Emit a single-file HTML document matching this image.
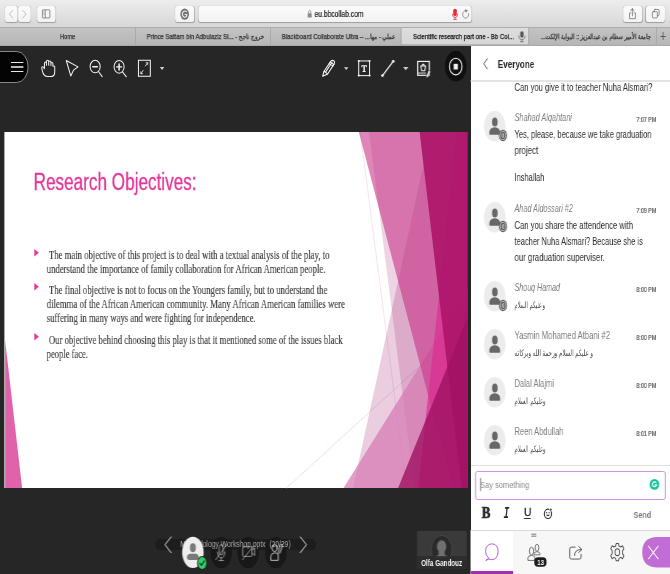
<!DOCTYPE html>
<html><head><meta charset="utf-8"><title>Bb Collaborate</title>
<style>
html,body{margin:0;padding:0;background:#262626;overflow:hidden;}
body{width:670px;height:574px;position:relative;}
#root{position:absolute;left:0;top:0;width:924.0px;height:574px;transform:scaleX(0.729847);transform-origin:0 0;overflow:hidden;background:#262626;font-family:"Liberation Sans",sans-serif;}
#root div{position:absolute;box-sizing:border-box;}
#root svg{position:absolute;overflow:visible;}
.t{white-space:nowrap;will-change:transform;}
</style></head><body><div id="root">
<div class="" style="left:0.0px;top:0px;width:923.48px;height:27px;background:linear-gradient(#ededed,#d7d7d7);"></div>
<div class="" style="left:6.58px;top:6.3px;width:16.99px;height:15.4px;background:linear-gradient(#fbfbfb,#f3f3f3);border-radius:3.5px;box-shadow:0 0.6px 1px rgba(0,0,0,.28),0 0 0.5px rgba(0,0,0,.2);"></div>
<div class="" style="left:24.94px;top:6.3px;width:17.4px;height:15.4px;background:linear-gradient(#fbfbfb,#f3f3f3);border-radius:3.5px;box-shadow:0 0.6px 1px rgba(0,0,0,.28),0 0 0.5px rgba(0,0,0,.2);"></div>
<div class="" style="left:50.56px;top:6.3px;width:25.48px;height:15.4px;background:linear-gradient(#fbfbfb,#f3f3f3);border-radius:3.5px;box-shadow:0 0.6px 1px rgba(0,0,0,.28),0 0 0.5px rgba(0,0,0,.2);"></div>
<div class="" style="left:240.05px;top:6.3px;width:25.62px;height:15.4px;background:linear-gradient(#fbfbfb,#f3f3f3);border-radius:3.5px;box-shadow:0 0.6px 1px rgba(0,0,0,.28),0 0 0.5px rgba(0,0,0,.2);"></div>
<div class="" style="left:272.39px;top:6.3px;width:374.05px;height:15.4px;background:linear-gradient(#fbfbfb,#f3f3f3);border-radius:3.5px;box-shadow:0 0.6px 1px rgba(0,0,0,.28),0 0 0.5px rgba(0,0,0,.2);"></div>
<div class="" style="left:853.6px;top:6.3px;width:26.03px;height:15.4px;background:linear-gradient(#fbfbfb,#f3f3f3);border-radius:3.5px;box-shadow:0 0.6px 1px rgba(0,0,0,.28),0 0 0.5px rgba(0,0,0,.2);"></div>
<div class="" style="left:885.25px;top:6.3px;width:26.03px;height:15.4px;background:linear-gradient(#fbfbfb,#f3f3f3);border-radius:3.5px;box-shadow:0 0.6px 1px rgba(0,0,0,.28),0 0 0.5px rgba(0,0,0,.2);"></div>
<svg style="left:0.0px;top:0px;width:137.01px;height:46px;" viewBox="0 0 670 308" preserveAspectRatio="none">
<g fill="none" stroke="#b9b9b9" stroke-width="6" stroke-linecap="round" stroke-linejoin="round">
<path d="M85,70 L63,95 L85,120"/><path d="M153,70 L175,95 L153,120"/></g>
<g fill="none" stroke="#6a6a6a" stroke-width="5"><rect x="284" y="66" width="50" height="54" rx="3"/><path d="M303,66 L303,120"/><path d="M289,78 h9 M289,88 h9 M289,98 h9" stroke-width="3"/></g>
</svg>
<svg style="left:232.93px;top:0px;width:137.01px;height:46px;" viewBox="0 0 670 308" preserveAspectRatio="none">
<ellipse cx="98" cy="95" rx="29" ry="38" fill="#727272"/>
<path d="M112,80 Q100,68 88,78 Q78,92 86,108 Q98,122 112,108 L112,97 L98,97" fill="none" stroke="#f4f4f4" stroke-width="7"/>
</svg>
<svg style="left:397.34px;top:0px;width:137.01px;height:46px;" viewBox="0 0 670 308" preserveAspectRatio="none">
<rect x="120" y="88" width="27" height="30" rx="3" fill="#8c8c8c"/>
<path d="M126,90 L126,80 Q126,70 133.5,70 Q141,70 141,80 L141,90" fill="none" stroke="#8c8c8c" stroke-width="5"/>
</svg>
<div class="t" style="left:431.05px;top:9.27px;font-size:9.2px;font-family:'Liberation Sans',sans-serif;line-height:normal;transform:scaleX(0.9993);transform-origin:left top;color:#1a1a1a;-webkit-text-stroke:0.2px #1a1a1a;">eu.bbcollab.com</div>
<svg style="left:602.87px;top:0px;width:137.01px;height:46px;" viewBox="0 0 670 308" preserveAspectRatio="none">
<rect x="88" y="58" width="24" height="50" rx="12" fill="#ea2a30"/>
<path d="M82,92 Q84,118 100,118 Q116,118 118,92 M100,118 L100,130 M88,130 L112,130" fill="none" stroke="#ea2a30" stroke-width="5"/>
<path d="M176,72 A20,25 0 1 0 190,88" fill="none" stroke="#7a7a7a" stroke-width="5"/>
<path d="M166,62 L186,70 L172,86 Z" fill="#7a7a7a"/>
</svg>
<svg style="left:780.99px;top:0px;width:137.01px;height:46px;" viewBox="0 0 670 308" preserveAspectRatio="none">
<g fill="none" stroke="#6d6d6d" stroke-width="5" stroke-linejoin="round" stroke-linecap="round">
<path d="M408,86 L399,86 L399,125 L438,125 L438,86 L429,86"/>
<path d="M418,106 L418,58 M407,72 L418,57 L429,72"/>
<rect x="564" y="63" width="33" height="42" rx="6"/>
<rect x="552" y="78" width="33" height="42" rx="6" fill="#f7f7f7"/>
</g>
</svg>
<div class="" style="left:0.0px;top:27px;width:923.48px;height:19px;background:linear-gradient(#c3c3c3,#b6b6b6);border-top:1px solid #aeaeae;border-bottom:1.6px solid #a8a8a8;"></div>
<div class="" style="left:549.7px;top:27.6px;width:174.28px;height:16.4px;background:linear-gradient(#dedede,#d6d6d6);"></div>
<div class="" style="left:184.97px;top:28px;width:0.96px;height:17px;background:#a3a3a3;"></div>
<div class="" style="left:369.94px;top:28px;width:0.96px;height:17px;background:#a3a3a3;"></div>
<div class="" style="left:549.43px;top:28px;width:0.96px;height:17px;background:#a3a3a3;"></div>
<div class="" style="left:723.99px;top:28px;width:0.96px;height:17px;background:#a3a3a3;"></div>
<div class="" style="left:899.23px;top:28px;width:0.96px;height:17px;background:#a3a3a3;"></div>
<div class="t" style="left:81.8px;top:32.1px;font-size:7.4px;font-family:'Liberation Sans',sans-serif;line-height:normal;transform:scaleX(1.07);transform-origin:left top;color:#333;-webkit-text-stroke:0.25px #333;">Home</div>
<div class="t" style="left:201.41px;top:32.1px;font-size:7.4px;font-family:'Liberation Sans',sans-serif;line-height:normal;transform:scaleX(1.1146);transform-origin:left top;color:#333;-webkit-text-stroke:0.25px #333;">Prince Sattam bin Adbulaziz Si... - خروج ناجح</div>
<div class="t" style="left:385.83px;top:32.1px;font-size:7.4px;font-family:'Liberation Sans',sans-serif;line-height:normal;transform:scaleX(1.1102);transform-origin:left top;color:#333;-webkit-text-stroke:0.25px #333;">Blackboard Collaborate Ultra – عملي - مها...&rlm;</div>
<div class="t" style="left:565.87px;top:32.1px;font-size:7.4px;font-family:'Liberation Sans',sans-serif;line-height:normal;transform:scaleX(1.1096);transform-origin:left top;color:#151515;-webkit-text-stroke:0.25px #151515;">Scientific research part one - Bb Col...</div>
<div class="t" style="left:741.11px;top:32.1px;font-size:7.4px;font-family:'Liberation Sans',sans-serif;line-height:normal;transform:scaleX(1.0231);transform-origin:left top;color:#333;-webkit-text-stroke:0.25px #333;direction:rtl;">جامعة الأمير سطام بن عبدالعزيز :: البوابة الإلكت...</div>
<div class="" style="left:904.57px;top:36px;width:7.4px;height:0.9px;background:#555;"></div>
<div class="" style="left:907.86px;top:32.3px;width:0.9px;height:8.2px;background:#555;"></div>
<svg style="left:687.81px;top:0px;width:230.19px;height:48px;" viewBox="0 0 670 191" preserveAspectRatio="none"><rect x="72" y="124" width="13" height="26" rx="6.5" fill="#555"/><path d="M66,142 Q67,158 78.5,158 Q90,158 91,142 M78.5,158 L78.5,166 M71,166 L86,166" fill="none" stroke="#555" stroke-width="2.6"/></svg>
<div class="" style="left:0.0px;top:45.9px;width:645.34px;height:528.1px;background:#262626;"></div>
<div class="" style="left:645.34px;top:46px;width:278.14px;height:528px;background:#fff;"></div>
<div class="slide" style="left:6.3px;top:131.9px;width:633.56px;height:355.8px;background:#fff;overflow:hidden;"></div>
<svg style="left:6.85px;top:132px;width:633.01px;height:356px;" viewBox="0 0 12192000 6858000" preserveAspectRatio="none"><line x1="9371012" y1="0" x2="10590212" y2="6858000" stroke="#f9dcec" stroke-width="1" vector-effect="non-scaling-stroke"/><line x1="12188825" y1="3681413" x2="7425267" y2="6858000" stroke="#f7d3e6" stroke-width="1" vector-effect="non-scaling-stroke"/><polygon points="11227007,0 12192000,0 12192000,6858000 9181475,6858000" fill="rgb(185,90,150)" fill-opacity="0.3"/><polygon points="9603442,0 12192000,0 12192000,6858000 10805778,6858000" fill="rgb(166,34,113)" fill-opacity="0.2"/><polygon points="8932333,6858000 12192000,3048000 12192000,6858000" fill="rgb(215,120,179)" fill-opacity="0.72"/><polygon points="9334500,0 12192000,0 12192000,6858000 11808442,6858000" fill="rgb(200,53,137)" fill-opacity="0.6"/><polygon points="11918465,0 12192000,0 12192000,6858000 10898730,6858000" fill="rgb(221,45,146)" fill-opacity="0.7"/><polygon points="10938999,0 12192000,0 12192000,6858000 12048381,6858000" fill="rgb(172,22,105)" fill-opacity="0.92"/><polygon points="10371666,6858000 12192000,3589867 12192000,6858000" fill="rgb(160,18,98)" fill-opacity="0.8"/><polygon points="0,4013200 448733,6858000 0,6858000" fill="rgb(219,70,155)" fill-opacity="0.85"/></svg>
<div class="t" style="left:45.63px;top:168.73px;font-size:23.5px;font-family:'Liberation Sans',sans-serif;line-height:normal;transform:scaleX(0.9999);transform-origin:left top;color:#E5389A;-webkit-text-stroke:0.35px #E5389A;">Research Objectives:</div>
<div class="t" style="left:67.27px;top:248.4px;font-size:11.9px;font-family:'Liberation Serif',serif;line-height:normal;transform:scaleX(1.0011);transform-origin:left top;color:#3c3c3c;-webkit-text-stroke:0.15px #3c3c3c;">The main objective of this project is to deal with a textual analysis of the play, to</div>
<div class="t" style="left:63.85px;top:262.4px;font-size:11.9px;font-family:'Liberation Serif',serif;line-height:normal;transform:scaleX(1.0022);transform-origin:left top;color:#3c3c3c;-webkit-text-stroke:0.15px #3c3c3c;">understand the importance of family collaboration for African American people.</div>
<div class="t" style="left:67.27px;top:282.8px;font-size:11.9px;font-family:'Liberation Serif',serif;line-height:normal;transform:scaleX(1.0068);transform-origin:left top;color:#3c3c3c;-webkit-text-stroke:0.15px #3c3c3c;">The final objective is not to focus on the Youngers family, but to understand the</div>
<div class="t" style="left:63.85px;top:297.1px;font-size:11.9px;font-family:'Liberation Serif',serif;line-height:normal;transform:scaleX(1.0088);transform-origin:left top;color:#3c3c3c;-webkit-text-stroke:0.15px #3c3c3c;">dilemma of the African American community. Many African American families were</div>
<div class="t" style="left:63.85px;top:311.4px;font-size:11.9px;font-family:'Liberation Serif',serif;line-height:normal;transform:scaleX(0.9983);transform-origin:left top;color:#3c3c3c;-webkit-text-stroke:0.15px #3c3c3c;">suffering in many ways and were fighting for independence.</div>
<div class="t" style="left:67.27px;top:332.6px;font-size:11.9px;font-family:'Liberation Serif',serif;line-height:normal;transform:scaleX(0.9988);transform-origin:left top;color:#3c3c3c;-webkit-text-stroke:0.15px #3c3c3c;">Our objective behind choosing this play is that it mentioned some of the issues black</div>
<div class="t" style="left:63.85px;top:347.0px;font-size:11.9px;font-family:'Liberation Serif',serif;line-height:normal;transform:scaleX(0.9804);transform-origin:left top;color:#3c3c3c;-webkit-text-stroke:0.15px #3c3c3c;">people face.</div>
<svg style="left:47.13px;top:248.89999999999998px;width:6.3px;height:7.6px;" viewBox="0 0 10 10" preserveAspectRatio="none"><polygon points="0,0 10,5 0,10" fill="#E5389A"/></svg>
<svg style="left:47.13px;top:283.2px;width:6.3px;height:7.6px;" viewBox="0 0 10 10" preserveAspectRatio="none"><polygon points="0,0 10,5 0,10" fill="#E5389A"/></svg>
<svg style="left:47.13px;top:333.4px;width:6.3px;height:7.6px;" viewBox="0 0 10 10" preserveAspectRatio="none"><polygon points="0,0 10,5 0,10" fill="#E5389A"/></svg>
<div class="" style="left:-16.44px;top:51.4px;width:55.35px;height:31.7px;background:#040404;border:1.3px solid #9a9a9a;border-radius:16px;"></div>
<div class="" style="left:15.07px;top:62.0px;width:16.85px;height:1.2px;background:#e8e8e8;"></div>
<div class="" style="left:15.07px;top:66.4px;width:16.85px;height:1.2px;background:#b8b8b8;"></div>
<div class="" style="left:15.07px;top:70.8px;width:16.85px;height:1.2px;background:#e8e8e8;"></div>
<svg style="left:47.96px;top:52px;width:102.76px;height:32px;" viewBox="0 0 670 286" preserveAspectRatio="none">
<g fill="none" stroke="#f4f4f4" stroke-width="9" stroke-linejoin="round" stroke-linecap="round">
<path d="M84,150 L84,102 Q84,90 93,90 Q102,90 102,102 L102,86 Q102,74 112,74 Q122,74 122,86 L122,118 M122,92 Q122,80 132,80 Q142,80 142,92 L142,120 M142,104 Q142,94 151,94 Q160,94 160,106 L160,128 Q168,120 176,130 L176,182 Q174,220 140,220 L108,220 Q84,218 72,190 L61,150 Q57,133 68,131 Q79,130 84,150 M102,100 L102,118"/>
<path d="M279,76 L384,133 L344,162 L319,214 Z"/>
<ellipse cx="537" cy="130" rx="45" ry="56"/>
<path d="M568,176 L600,220"/>
<path d="M516,131 L557,131" stroke-width="13"/>
</g></svg>
<svg style="left:143.87px;top:52px;width:102.76px;height:32px;" viewBox="0 0 670 286" preserveAspectRatio="none">
<g fill="none" stroke="#f4f4f4" stroke-width="9" stroke-linejoin="round" stroke-linecap="round">
<ellipse cx="125" cy="132" rx="45" ry="57"/>
<path d="M157,180 L190,222"/>
<path d="M104,133 L147,133 M125,106 L125,160" stroke-width="13"/>
<rect x="298" y="74" width="106" height="143" stroke-linejoin="miter"/>
<path d="M360,125 L380,97 M366,96 L381,96 L381,112 M340,165 L320,193 M319,177 L319,194 L334,194" stroke-width="7"/>
</g>
<polygon points="489,134 529,134 509,160" fill="#d0d0d0"/></svg>
<svg style="left:431.6px;top:52px;width:102.76px;height:32px;" viewBox="0 0 670 286" preserveAspectRatio="none">
<g fill="none" stroke="#f4f4f4" stroke-width="9.5" stroke-linejoin="round" stroke-linecap="round">
<path d="M66,216 L78,172 L138,84 Q150,70 165,78 Q178,88 170,104 L110,196 Z"/>
<path d="M78,172 L110,196 M92,180 L150,92 M124,104 L158,124 M132,92 L166,112"/>
<rect x="388" y="80" width="97" height="131" stroke-linejoin="miter" stroke-width="9"/>
</g>
<g fill="#f4f4f4">
<circle cx="388" cy="80" r="9"/><circle cx="485" cy="80" r="9"/><circle cx="388" cy="211" r="9"/><circle cx="485" cy="211" r="9"/>
<path d="M412,118 L461,118 L461,136 L455,136 L453,127 L443,127 L443,170 L451,172 L451,178 L422,178 L422,172 L430,170 L430,127 L420,127 L418,136 L412,136 Z"/>
</g>
<polygon points="256,137 296,137 276,161" fill="#d0d0d0"/></svg>
<svg style="left:513.81px;top:48px;width:137.01px;height:40px;" viewBox="0 0 670 268" preserveAspectRatio="none">
<ellipse cx="540" cy="122" rx="72" ry="102" fill="#0f0f0f"/>
<g fill="none" stroke="#f4f4f4" stroke-width="8" stroke-linejoin="round" stroke-linecap="round">
<path d="M49,185 L121,89"/>
<rect x="285" y="90" width="78" height="93" stroke-linejoin="miter"/>
<path d="M285,168 L338,168" stroke-width="6"/>
<path d="M306,120 L338,120 L333,152 L311,152 Z M313,118 Q322,98 331,118" stroke-width="7"/>
<ellipse cx="540" cy="124" rx="42" ry="56" stroke-width="7"/>
</g>
<g fill="#f4f4f4">
<circle cx="49" cy="185" r="9"/><circle cx="121" cy="89" r="9"/>
<rect x="526" y="106" width="28" height="38"/>
<path d="M343,188 L357,150 L372,157 L357,194 L340,199 Z" stroke="#262626" stroke-width="4"/>
</g>
<polygon points="187,128 223,128 205,149" fill="#d0d0d0"/></svg>
<svg style="left:643.97px;top:45px;width:274.03px;height:85px;" viewBox="0 0 670 285" preserveAspectRatio="none"><path d="M58,46 L46,63 L58,80" fill="none" stroke="#555" stroke-width="3.2" stroke-linecap="round" stroke-linejoin="round"/></svg>
<div class="t" style="left:681.65px;top:56.7px;font-size:11.6px;font-family:'Liberation Sans',sans-serif;line-height:normal;transform:scaleX(0.958);transform-origin:left top;color:#2a2a2a;font-weight:bold;">Everyone</div>
<div class="" style="left:645.34px;top:80.1px;width:278.14px;height:1.7px;background:#e3e3e3;"></div>
<div class="t" style="left:704.53px;top:82.07px;font-size:10.2px;font-family:'Liberation Sans',sans-serif;line-height:normal;transform:scaleX(1.0228);transform-origin:left top;color:#2c2c2c;">Can you give it to teacher Nuha Alsmari?</div>
<svg style="left:662.6px;top:111.4px;width:29.6px;height:30.599999999999994px;" viewBox="0 0 100 100" preserveAspectRatio="none">
<circle cx="50" cy="50" r="50" fill="#ececec"/>
<ellipse cx="50.5" cy="36" rx="13" ry="15" fill="#676767"/>
<path d="M25,74 L25,70 Q26,54 50,53 Q74,54 75,70 L75,74 Q75,78 70,78 L30,78 Q25,78 25,74 Z" fill="#676767"/>
<circle cx="88" cy="80" r="19" fill="#5c5c5c"/>
<circle cx="88" cy="80" r="13.5" fill="none" stroke="#f2f2f2" stroke-width="2.4"/>
<path d="M91,73 L91,87 L84,84 L84,76 Z" fill="none" stroke="#f2f2f2" stroke-width="2.4" stroke-linejoin="round"/></svg>
<div class="t" style="left:704.53px;top:111.77px;font-size:10.2px;font-family:'Liberation Sans',sans-serif;line-height:normal;transform:scaleX(0.9806);transform-origin:left top;color:#7e7e7e;font-style:italic;">Shahad Alqahtani</div>
<div class="t" style="left:871.83px;top:115.85px;font-size:6.8px;font-family:'Liberation Sans',sans-serif;line-height:normal;transform:scaleX(1.0718);transform-origin:left top;color:#555;-webkit-text-stroke:0.2px #555;">7:07 PM</div>
<div class="t" style="left:704.53px;top:128.77px;font-size:10.2px;font-family:'Liberation Sans',sans-serif;line-height:normal;transform:scaleX(1.0124);transform-origin:left top;color:#2c2c2c;">Yes, please, because we take graduation</div>
<div class="t" style="left:704.53px;top:144.77px;font-size:10.2px;font-family:'Liberation Sans',sans-serif;line-height:normal;transform:scaleX(1.0576);transform-origin:left top;color:#2c2c2c;">project</div>
<div class="t" style="left:704.53px;top:171.57px;font-size:10.2px;font-family:'Liberation Sans',sans-serif;line-height:normal;transform:scaleX(1.0012);transform-origin:left top;color:#2c2c2c;">Inshallah</div>
<svg style="left:662.6px;top:201.7px;width:29.6px;height:30.600000000000023px;" viewBox="0 0 100 100" preserveAspectRatio="none">
<circle cx="50" cy="50" r="50" fill="#ececec"/>
<ellipse cx="50.5" cy="36" rx="13" ry="15" fill="#676767"/>
<path d="M25,74 L25,70 Q26,54 50,53 Q74,54 75,70 L75,74 Q75,78 70,78 L30,78 Q25,78 25,74 Z" fill="#676767"/>
<circle cx="88" cy="80" r="19" fill="#5c5c5c"/>
<circle cx="88" cy="80" r="13.5" fill="none" stroke="#f2f2f2" stroke-width="2.4"/>
<path d="M91,73 L91,87 L84,84 L84,76 Z" fill="none" stroke="#f2f2f2" stroke-width="2.4" stroke-linejoin="round"/></svg>
<div class="t" style="left:704.53px;top:203.17px;font-size:10.2px;font-family:'Liberation Sans',sans-serif;line-height:normal;transform:scaleX(0.9687);transform-origin:left top;color:#7e7e7e;font-style:italic;">Ahad Aldossari #2</div>
<div class="t" style="left:871.83px;top:206.85px;font-size:6.8px;font-family:'Liberation Sans',sans-serif;line-height:normal;transform:scaleX(1.0718);transform-origin:left top;color:#555;-webkit-text-stroke:0.2px #555;">7:09 PM</div>
<div class="t" style="left:704.53px;top:220.47px;font-size:10.2px;font-family:'Liberation Sans',sans-serif;line-height:normal;transform:scaleX(1.0312);transform-origin:left top;color:#2c2c2c;">Can you share the attendence with</div>
<div class="t" style="left:704.53px;top:236.07px;font-size:10.2px;font-family:'Liberation Sans',sans-serif;line-height:normal;transform:scaleX(1.0046);transform-origin:left top;color:#2c2c2c;">teacher Nuha Alsmari? Because she is</div>
<div class="t" style="left:704.53px;top:251.77px;font-size:10.2px;font-family:'Liberation Sans',sans-serif;line-height:normal;transform:scaleX(1.048);transform-origin:left top;color:#2c2c2c;">our graduation superviser.</div>
<svg style="left:662.6px;top:281.09999999999997px;width:29.6px;height:30.600000000000023px;" viewBox="0 0 100 100" preserveAspectRatio="none">
<circle cx="50" cy="50" r="50" fill="#ececec"/>
<ellipse cx="50.5" cy="36" rx="13" ry="15" fill="#676767"/>
<path d="M25,74 L25,70 Q26,54 50,53 Q74,54 75,70 L75,74 Q75,78 70,78 L30,78 Q25,78 25,74 Z" fill="#676767"/>
<circle cx="88" cy="80" r="19" fill="#5c5c5c"/>
<circle cx="88" cy="80" r="13.5" fill="none" stroke="#f2f2f2" stroke-width="2.4"/>
<path d="M91,73 L91,87 L84,84 L84,76 Z" fill="none" stroke="#f2f2f2" stroke-width="2.4" stroke-linejoin="round"/></svg>
<div class="t" style="left:704.53px;top:282.27px;font-size:10.2px;font-family:'Liberation Sans',sans-serif;line-height:normal;transform:scaleX(0.9549);transform-origin:left top;color:#7e7e7e;font-style:italic;">Shouq Hamad</div>
<div class="t" style="left:871.83px;top:286.35px;font-size:6.8px;font-family:'Liberation Sans',sans-serif;line-height:normal;transform:scaleX(1.0718);transform-origin:left top;color:#555;-webkit-text-stroke:0.2px #555;">8:00 PM</div>
<div class="t" style="left:704.53px;top:298.77px;font-size:10.2px;font-family:'Liberation Sans',sans-serif;line-height:normal;transform:scaleX(0.7409);transform-origin:left top;color:#2c2c2c;direction:rtl;font-size:9.4px;color:#4c4c4c;">و عليكم السلام</div>
<svg style="left:662.6px;top:328.9px;width:29.6px;height:30.600000000000023px;" viewBox="0 0 100 100" preserveAspectRatio="none">
<circle cx="50" cy="50" r="50" fill="#ececec"/>
<ellipse cx="50.5" cy="36" rx="13" ry="15" fill="#676767"/>
<path d="M25,74 L25,70 Q26,54 50,53 Q74,54 75,70 L75,74 Q75,78 70,78 L30,78 Q25,78 25,74 Z" fill="#676767"/>
</svg>
<div class="t" style="left:704.53px;top:330.17px;font-size:10.2px;font-family:'Liberation Sans',sans-serif;line-height:normal;transform:scaleX(1.033);transform-origin:left top;color:#7e7e7e;">Yasmin Mohamed Atbani #2</div>
<div class="t" style="left:871.83px;top:334.35px;font-size:6.8px;font-family:'Liberation Sans',sans-serif;line-height:normal;transform:scaleX(1.0718);transform-origin:left top;color:#555;-webkit-text-stroke:0.2px #555;">8:00 PM</div>
<div class="t" style="left:704.53px;top:346.77px;font-size:10.2px;font-family:'Liberation Sans',sans-serif;line-height:normal;transform:scaleX(0.8304);transform-origin:left top;color:#2c2c2c;direction:rtl;font-size:9.4px;color:#4c4c4c;">و عليكم السلام ورحمة الله وبركاته</div>
<svg style="left:662.6px;top:376.9px;width:29.6px;height:30.600000000000023px;" viewBox="0 0 100 100" preserveAspectRatio="none">
<circle cx="50" cy="50" r="50" fill="#ececec"/>
<ellipse cx="50.5" cy="36" rx="13" ry="15" fill="#676767"/>
<path d="M25,74 L25,70 Q26,54 50,53 Q74,54 75,70 L75,74 Q75,78 70,78 L30,78 Q25,78 25,74 Z" fill="#676767"/>
</svg>
<div class="t" style="left:704.53px;top:378.07px;font-size:10.2px;font-family:'Liberation Sans',sans-serif;line-height:normal;transform:scaleX(1.014);transform-origin:left top;color:#7e7e7e;">Dalal Alajmi</div>
<div class="t" style="left:871.83px;top:382.35px;font-size:6.8px;font-family:'Liberation Sans',sans-serif;line-height:normal;transform:scaleX(1.0718);transform-origin:left top;color:#555;-webkit-text-stroke:0.2px #555;">8:00 PM</div>
<div class="t" style="left:704.53px;top:394.77px;font-size:10.2px;font-family:'Liberation Sans',sans-serif;line-height:normal;transform:scaleX(0.7769);transform-origin:left top;color:#2c2c2c;direction:rtl;font-size:9.4px;color:#4c4c4c;">وعليكم السلام</div>
<svg style="left:662.6px;top:424.9px;width:29.6px;height:30.600000000000023px;" viewBox="0 0 100 100" preserveAspectRatio="none">
<circle cx="50" cy="50" r="50" fill="#ececec"/>
<ellipse cx="50.5" cy="36" rx="13" ry="15" fill="#676767"/>
<path d="M25,74 L25,70 Q26,54 50,53 Q74,54 75,70 L75,74 Q75,78 70,78 L30,78 Q25,78 25,74 Z" fill="#676767"/>
</svg>
<div class="t" style="left:704.53px;top:426.07px;font-size:10.2px;font-family:'Liberation Sans',sans-serif;line-height:normal;transform:scaleX(1.0108);transform-origin:left top;color:#7e7e7e;">Reen Abdullah</div>
<div class="t" style="left:871.83px;top:430.35px;font-size:6.8px;font-family:'Liberation Sans',sans-serif;line-height:normal;transform:scaleX(1.0718);transform-origin:left top;color:#555;-webkit-text-stroke:0.2px #555;">8:01 PM</div>
<div class="t" style="left:704.53px;top:442.77px;font-size:10.2px;font-family:'Liberation Sans',sans-serif;line-height:normal;transform:scaleX(0.7769);transform-origin:left top;color:#2c2c2c;direction:rtl;font-size:9.4px;color:#4c4c4c;">وعليكم السلام</div>
<div class="" style="left:645.34px;top:465px;width:278.14px;height:1px;background:#dedede;"></div>
<div class="" style="left:650.82px;top:471.3px;width:261.01px;height:28.6px;background:#fff;border:1.4px solid #c583d6;border-radius:3px;"></div>
<div class="" style="left:657.67px;top:478px;width:0.96px;height:13px;background:#555;"></div>
<div class="t" style="left:658.49px;top:480.46px;font-size:9.1px;font-family:'Liberation Sans',sans-serif;line-height:normal;transform:scaleX(1.1183);transform-origin:left top;color:#8c8c8c;">Say something</div>
<svg style="left:889.77px;top:478.9px;width:13.15px;height:10.800000000000011px;" viewBox="0 0 100 100" preserveAspectRatio="none"><circle cx="50" cy="50" r="50" fill="#15c39a"/><path d="M68,36 A22,22 0 1 0 72,54 L52,54" fill="none" stroke="#fff" stroke-width="11"/></svg>
<div class="t" style="left:659.59px;top:504.42px;font-size:15.8px;font-family:'Liberation Serif',serif;line-height:normal;transform:scaleX(1.1302);transform-origin:left top;color:#2b2b2b;font-weight:bold;-webkit-text-stroke:0.6px #2b2b2b;">B</div>
<div class="t" style="left:690.28px;top:503.57px;font-size:16.5px;font-family:'Liberation Sans',sans-serif;line-height:normal;transform:scaleX(0.7743);transform-origin:left top;color:#2b2b2b;font-weight:bold;font-style:italic;font-family:'Liberation Mono',monospace;">I</div>
<div class="t" style="left:717.55px;top:506.33px;font-size:10.8px;font-family:'Liberation Sans',sans-serif;line-height:normal;transform:scaleX(1.2979);transform-origin:left top;color:#2b2b2b;-webkit-text-stroke:0.3px #2b2b2b;">U</div>
<div class="" style="left:718.23px;top:517.8px;width:8.49px;height:1px;background:#2b2b2b;"></div>
<svg style="left:649.45px;top:500px;width:123.31px;height:28px;" viewBox="0 0 670 208" preserveAspectRatio="none"><ellipse cx="553" cy="103" rx="27" ry="35" fill="none" stroke="#2b2b2b" stroke-width="8"/><ellipse cx="543" cy="95" rx="4.5" ry="6" fill="#2b2b2b"/><ellipse cx="562" cy="95" rx="4.5" ry="6" fill="#2b2b2b"/><path d="M538,110 Q553,130 568,110 Z" fill="#2b2b2b"/><circle cx="574" cy="72" r="12" fill="#fff"/><path d="M566,72 h16 M574,63 v18" stroke="#2b2b2b" stroke-width="6"/></svg>
<div class="t" style="left:868.13px;top:509.1px;font-size:9.5px;font-family:'Liberation Sans',sans-serif;line-height:normal;transform:scaleX(1.0377);transform-origin:left top;color:#7a7a7a;font-weight:bold;">Send</div>
<div class="" style="left:645.42px;top:530px;width:278.14px;height:44px;background:#f7f7f7;border-top:1px solid #d9d9d9;"></div>
<div class="" style="left:645.42px;top:530.5px;width:57.88px;height:43.5px;background:#fff;"></div>
<div class="" style="left:645.42px;top:570.9px;width:57.88px;height:3.2px;background:#a22eb3;"></div>
<svg style="left:643.97px;top:528px;width:274.03px;height:46px;" viewBox="0 0 670 154" preserveAspectRatio="none">
<path d="M205,21 h17 M205,27.6 h17" stroke="#a2a2a2" stroke-width="5"/>
<g fill="none" stroke-linecap="round" stroke-linejoin="round">
<path d="M62,100 Q52,92 52,78 Q53,54 73,53 Q94,54 94,79 Q93,106 72,106 Q67,106 63,104 L54,108 Z" stroke="#b455d1" stroke-width="3.2"/>
<g stroke="#4a4a4a" stroke-width="3">
<path d="M352,64 L340,64 Q334,64 334,71 L334,98 Q334,104 340,104 L366,104 Q372,104 372,98 L372,88"/>
<path d="M350,92 Q350,72 372,72 M364,62 L375,72 L364,82"/>
<g transform="translate(493.5,81) scale(0.96,1.15) translate(-493,-81)"><ellipse cx="493" cy="81" rx="8" ry="10"/>
<path d="M489,56 L497,56 L499,63 L505,66 L511,62 L516,71 L511,77 L511,85 L516,91 L511,100 L505,96 L499,99 L497,106 L489,106 L487,99 L481,96 L475,100 L470,91 L475,85 L475,77 L470,71 L475,62 L481,66 L487,63 Z"/>
</g></g></g>

<path d="M577,81 Q577,30 628,30 L670,30 L670,132 L628,132 Q577,132 577,81 Z" fill="#c06dd6"/>
<path d="M598,61 L630,103 M630,61 L598,103" stroke="#fff" stroke-width="3.6" stroke-linecap="round"/>
</svg>
<svg style="left:705.63px;top:530px;width:116.46px;height:44px;" viewBox="0 0 670 347" preserveAspectRatio="none">
<g fill="#f7f7f7" stroke="#4a4a4a" stroke-width="6" stroke-linejoin="round">
<ellipse cx="171" cy="140" rx="15" ry="27"/>
<path d="M148,196 L148,184 Q150,172 171,171 Q192,172 194,184 L194,196 Z"/>
<ellipse cx="128" cy="166" rx="17" ry="30"/>
<path d="M100,240 L100,218 Q102,202 128,200 Q152,202 154,218 L154,240 Z"/>
</g>
<rect x="150" y="214" width="96" height="76" rx="30" fill="#1c1c1c"/>
</svg>
<div class="t" style="left:736.18px;top:558.36px;font-size:8px;font-family:'Liberation Sans',sans-serif;line-height:normal;transform:scaleX(1.0611);transform-origin:left top;color:#fff;font-weight:bold;">13</div>
<div class="" style="left:212.65px;top:539.2px;width:220.05px;height:11.2px;background:#1d1d1d;border-radius:6px;"></div>
<svg style="left:205.52px;top:528px;width:137.01px;height:46px;" viewBox="0 0 670 308" preserveAspectRatio="none"><ellipse cx="475" cy="165" rx="72" ry="105" fill="#181818"/></svg>
<svg style="left:315.13px;top:528px;width:137.01px;height:46px;" viewBox="0 0 670 308" preserveAspectRatio="none"><ellipse cx="122" cy="165" rx="72" ry="105" fill="#181818"/><ellipse cx="308" cy="165" rx="72" ry="105" fill="#181818"/></svg>
<div class="t" style="left:247.45px;top:540.28px;font-size:8.2px;font-family:'Liberation Sans',sans-serif;line-height:normal;transform:scaleX(1.1269);transform-origin:left top;color:#a9a9a9;">Methodology Workshop.pptx&nbsp; (20/29)</div>
<svg style="left:205.52px;top:528px;width:137.01px;height:46px;" viewBox="0 0 670 308" preserveAspectRatio="none">
<path d="M139,60 L98,112 L139,165" fill="none" stroke="#f2f2f2" stroke-width="6" stroke-linecap="round" stroke-linejoin="round"/>
<ellipse cx="285" cy="163" rx="72" ry="105" fill="#eeeeee"/>
<ellipse cx="285" cy="132" rx="20" ry="30" fill="#7a7a7a"/>
<path d="M245,200 Q245,176 265,172 L305,172 Q325,176 325,200 Q325,214 310,214 L260,214 Q245,214 245,200 Z" fill="#7a7a7a"/>
<ellipse cx="347" cy="235" rx="34" ry="48" fill="#262626"/>
<ellipse cx="347" cy="235" rx="28" ry="40" fill="#2fd064"/>
<path d="M332,236 L343,250 L362,220" fill="none" stroke="#1d1d1d" stroke-width="7" stroke-linecap="round" stroke-linejoin="round"/>
<g fill="none" stroke="#b4b4b4" stroke-width="5" stroke-linecap="round">
<rect x="462" y="112" width="26" height="68" rx="13"/>
<path d="M450,160 Q452,200 475,200 Q498,200 500,160 M475,200 L475,218 M460,218 L490,218"/>
<path d="M438,212 L512,112"/>
</g>
</svg>
<svg style="left:315.13px;top:528px;width:137.01px;height:46px;" viewBox="0 0 670 308" preserveAspectRatio="none">
<path d="M472,60 L513,112 L472,165" fill="none" stroke="#f2f2f2" stroke-width="6" stroke-linecap="round" stroke-linejoin="round"/>
<g fill="none" stroke="#b4b4b4" stroke-width="5" stroke-linecap="round" stroke-linejoin="round">
<rect x="86" y="126" width="62" height="64" rx="6"/>
<path d="M148,150 L166,134 L166,184 L148,168"/>
<path d="M85,212 L160,118"/>
</g>
<g fill="none" stroke="#f0f0f0" stroke-width="5" stroke-linecap="round" stroke-linejoin="round">
<ellipse cx="300" cy="135" rx="17" ry="23"/>
<path d="M274,214 L274,190 Q276,168 300,166 Q316,166 324,178 L324,214 Z"/>
<path d="M322,176 L336,118 Q342,104 350,110 Q354,116 350,126 L336,168"/>
</g>
</svg>
<svg style="left:548.06px;top:520px;width:102.76px;height:54px;" viewBox="0 0 670 482" preserveAspectRatio="none">
<rect x="152" y="97" width="445" height="340" fill="#3a3a3a"/>
<ellipse cx="372" cy="262" rx="93" ry="124" fill="#2a2a2a" stroke="#585858" stroke-width="5"/>
<ellipse cx="372" cy="236" rx="42" ry="56" fill="#707070"/>
<path d="M345,280 L345,310 Q320,318 300,340 L445,340 Q425,318 400,310 L400,280 Z" fill="#707070"/>
<rect x="152" y="322" width="445" height="115" fill="#2d2d2d" fill-opacity="0.92"/>
</svg>
<div class="t" style="left:576.7px;top:557.71px;font-size:8.5px;font-family:'Liberation Sans',sans-serif;line-height:normal;transform:scaleX(1.0168);transform-origin:left top;color:#f4f4f4;font-weight:bold;">Olfa Gandouz</div>
</div></body></html>
